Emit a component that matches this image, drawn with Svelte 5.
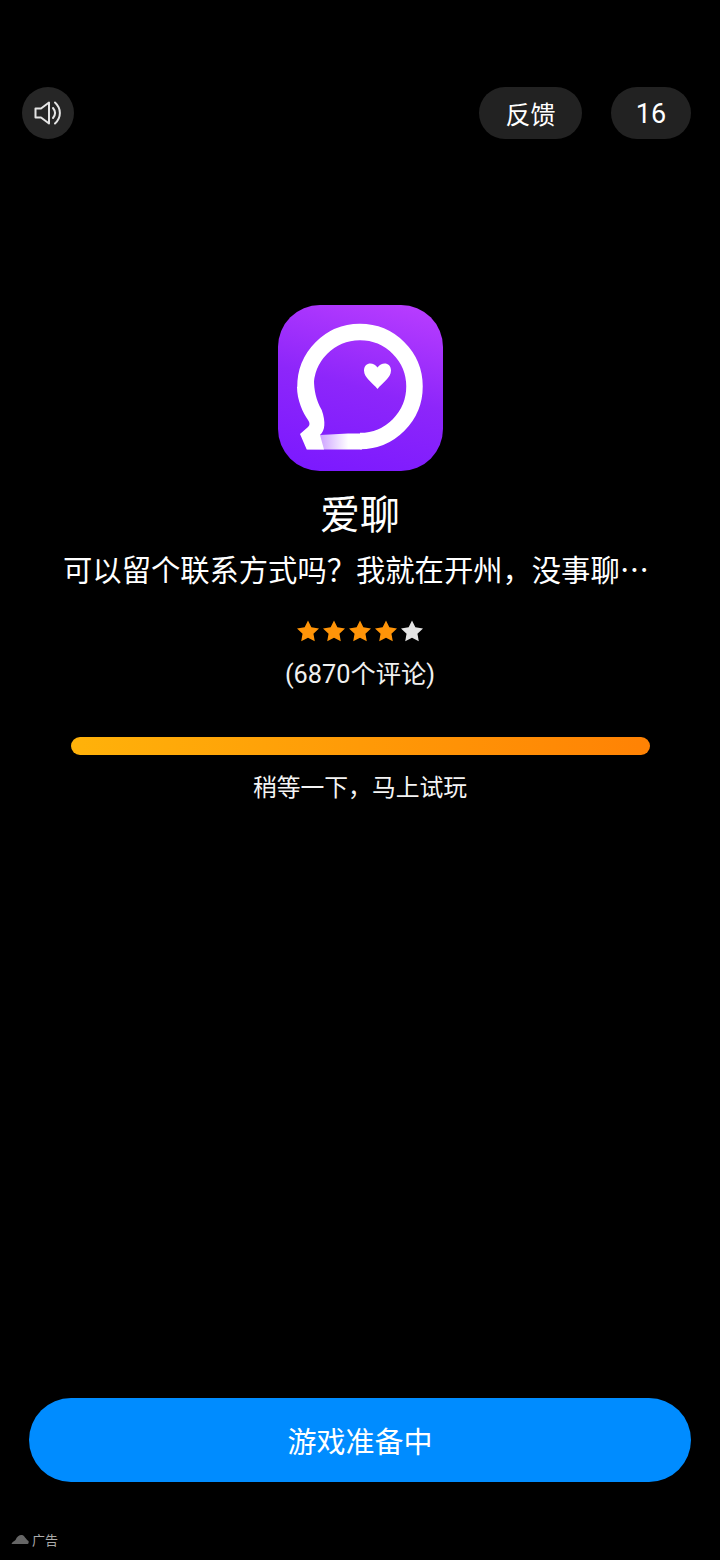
<script>
  const stars = [true, true, true, true, false];
  const starPath = "M12.5 1 L16 8.2 L24 9.3 L18.2 14.8 L19.6 22.8 L12.5 19 L5.4 22.8 L6.8 14.8 L1 9.3 L9 8.2 Z";
</script>

<div class="page">
  <div class="topbar">
    <button class="sound" aria-label="sound">
      <svg width="28" height="28" viewBox="0 0 28 28" fill="none" stroke="#e4e4e4" stroke-width="2" stroke-linejoin="round" stroke-linecap="round">
        <path d="M1.5 9.5 H7 L15 3.5 V24.5 L7 18.5 H1.5 Z" />
        <path d="M19 9 C21.5 12 21.5 16 19 19" />
        <path d="M21 3.5 C27.5 9.5 27.5 18.5 21 24.5" />
      </svg>
    </button>
    <div class="right">
      <div class="pill feedback">反馈</div>
      <div class="pill count">16</div>
    </div>
  </div>

  <div class="center">
    <div class="appicon">
      <svg width="165" height="166" viewBox="0 0 165 166">
        <defs>
          <linearGradient id="fade" x1="0" y1="0" x2="1" y2="0">
            <stop offset="0" stop-color="#b678ff" />
            <stop offset="0.75" stop-color="#ffffff" />
          </linearGradient>
        </defs>
        <path d="M82 136 A54.5 54.5 0 1 0 27.5 82" fill="none" stroke="#fff" stroke-width="16.5" />
        <path d="M42 130 L70 128.5 H84 V144.5 H29 Z" fill="url(#fade)" />
        <path d="M19 82 C19 95 25 108 30 115 C32 118 32 120 30 122 L22 129 L28.7 144.5 L46 144.5 L42 130 C47 126 48 117 43.7 105 C38 95 36 85 36 75 Z" fill="#fff" />
        <path d="M99.5 84 C95 78 86 73 86 65.5 C86 57.5 95 56 99.5 62.5 C104 56 113 57.5 113 65.5 C113 73 104 78 99.5 84 Z" fill="#fff" />
      </svg>
    </div>
    <h1>爱聊</h1>
    <p class="desc">可以留个联系方式吗？我就在开州，没事聊…</p>
    <div class="stars">
      {#each stars as on}
        <svg width="22" height="22" viewBox="1 1 23 22"><path d={starPath} fill={on ? "#ff9408" : "#e4e4e4"} /></svg>
      {/each}
    </div>
    <div class="reviews">(6870个评论)</div>
    <div class="bar"></div>
    <div class="wait">稍等一下，马上试玩</div>
  </div>

  <div class="cta">游戏准备中</div>

  <div class="adtag">
    <svg width="18" height="11" viewBox="0 0 18 11"><path d="M0.5 10 C1 8 3 7.5 4.5 6 C6 2 9 0.5 11 1 C13.5 1.5 14.5 5 17.5 7 C18 8.5 17.5 10 16.5 10 Z" fill="#666" /></svg>
    <span>广告</span>
  </div>
</div>

<style>
  :global(body) {
    background: #000;
  }
  .page {
    width: 720px;
    height: 1560px;
    background: #000;
    color: #fff;
    display: flex;
    flex-direction: column;
    font-family: "Noto Sans CJK SC", "Noto Sans", sans-serif;
    overflow: hidden;
  }
  .topbar {
    display: flex;
    justify-content: space-between;
    padding: 87px 29px 0 22px;
  }
  .sound {
    width: 52px;
    height: 52px;
    border: 0;
    padding: 0;
    border-radius: 50%;
    background: #262626;
    display: flex;
    align-items: center;
    justify-content: center;
  }
  .right {
    display: flex;
    gap: 29px;
  }
  .pill {
    height: 52px;
    border-radius: 26px;
    background: #222;
    display: flex;
    align-items: center;
    justify-content: center;
    font-size: 25px;
  }
  .feedback { width: 103px; }
  .count { width: 80px; font-family: "Roboto", sans-serif; font-size: 27px; padding-top: 2px; box-sizing: border-box; }
  .center {
    display: flex;
    flex-direction: column;
    align-items: center;
    margin-top: 166px;
  }
  .appicon {
    width: 165px;
    height: 166px;
    border-radius: 42px;
    overflow: hidden;
    background: linear-gradient(195deg, #bb3eff 0%, #8d26fa 50%, #7a18ff 100%);
  }
  .appicon svg { display: block; }
  h1 {
    margin: 13px 0 0;
    font-size: 40px;
    font-weight: 400;
    line-height: 56px;
  }
  .desc {
    margin: 8px 8px 0 0;
    font-size: 29.3px;
    line-height: 40px;
    white-space: nowrap;
    color: #fff;
  }
  .stars {
    display: flex;
    gap: 4px;
    margin-top: 32px;
    height: 22px;
  }
  .stars svg { display: block; }
  .reviews {
    margin-top: 15px;
    font-size: 25.3px;
    line-height: 36px;
    color: #f0f0f0;
    font-family: "Roboto", "Noto Sans CJK SC", sans-serif;
  }
  .bar {
    width: 579px;
    height: 18px;
    margin-top: 44px;
    border-radius: 9px;
    background: linear-gradient(90deg, #ffb20a 0%, #ff8204 100%);
  }
  .wait {
    margin-top: 14px;
    font-size: 23.8px;
    line-height: 34px;
    color: #f4f4f4;
  }
  .cta {
    margin: auto 29px 0;
    height: 84px;
    border-radius: 42px;
    background: #008cff;
    display: flex;
    align-items: center;
    justify-content: center;
    font-size: 29px;
  }
  .adtag {
    display: flex;
    align-items: center;
    gap: 3px;
    height: 30px;
    margin-top: 42px;
    margin-bottom: 6px;
    padding: 0 0 0 11px;
    color: #aaa;
    font-size: 13px;
  }
</style>
